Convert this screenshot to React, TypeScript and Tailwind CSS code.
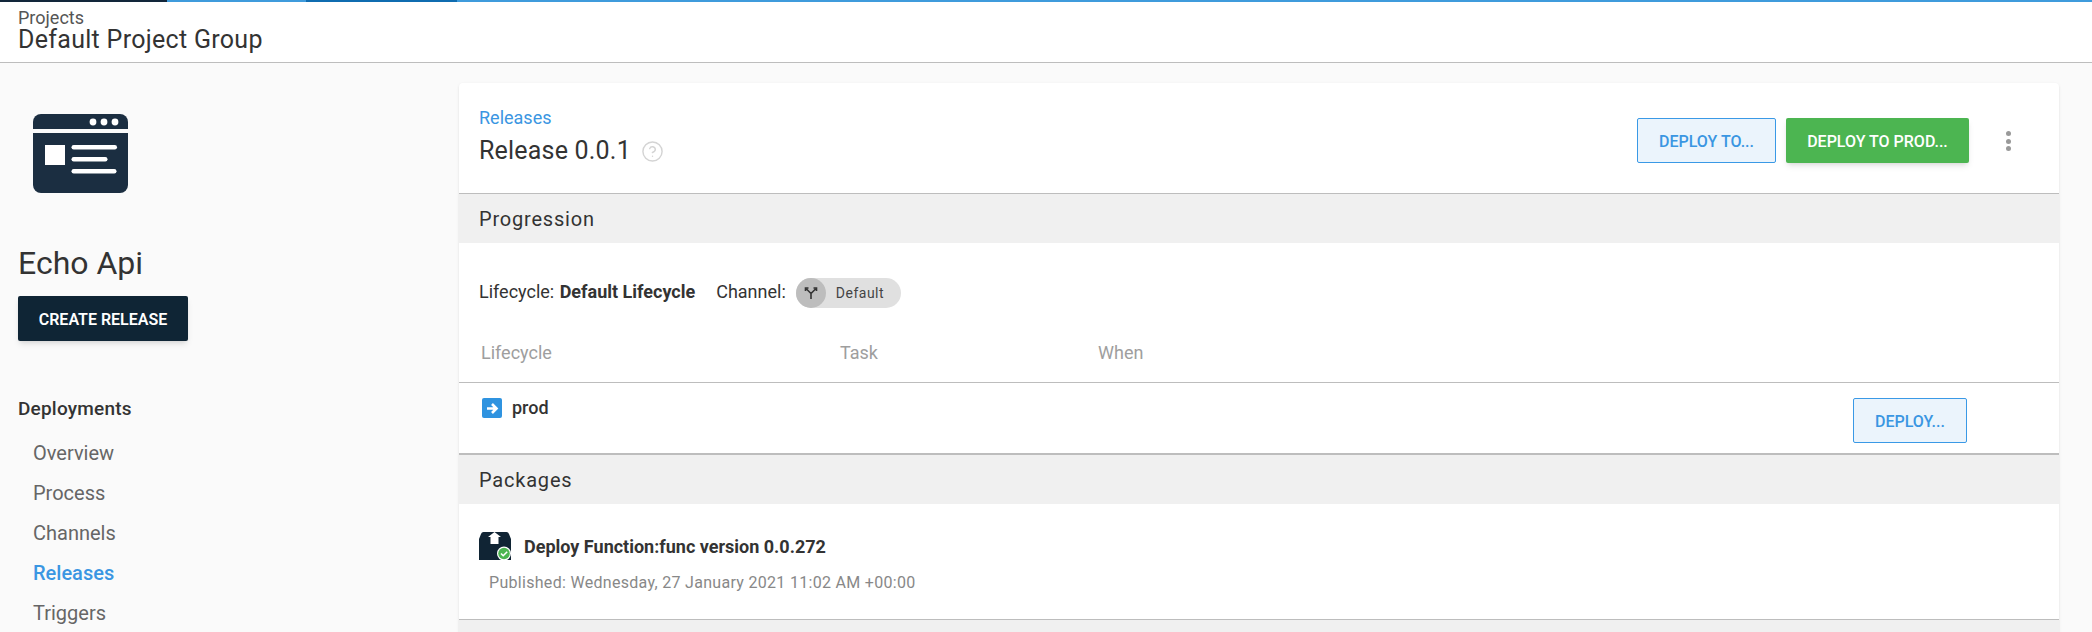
import { CircleHelp } from 'lucide-react';

const navItems = ['Overview', 'Process', 'Channels', 'Releases', 'Triggers'];

function AppIcon() {
  return (
    <svg width="95" height="79" viewBox="0 0 95 79" className="block">
      <path d="M0 15V8a8 8 0 0 1 8-8h79a8 8 0 0 1 8 8v7z" fill="#1b2e41" />
      <path d="M0 19h95v52a8 8 0 0 1-8 8H8a8 8 0 0 1-8-8z" fill="#1b2e41" />
      <circle cx="60" cy="8" r="3.4" fill="#fff" />
      <circle cx="71" cy="8" r="3.4" fill="#fff" />
      <circle cx="82" cy="8" r="3.4" fill="#fff" />
      <rect x="12" y="31" width="20" height="20" fill="#fff" />
      <rect x="38.5" y="31" width="45.5" height="4.4" rx="2.2" fill="#fff" />
      <rect x="38.5" y="43" width="36" height="4.4" rx="2.2" fill="#fff" />
      <rect x="38.5" y="55" width="45" height="4.4" rx="2.2" fill="#fff" />
    </svg>
  );
}

function SectionHeader({ title }: { title: string }) {
  return (
    <div className="h-[49px] bg-[#f0f0f0] pl-5 flex items-center text-[20px] tracking-[0.8px] text-[#333]">
      {title}
    </div>
  );
}

function OutlineButton({ label, width }: { label: string; width: string }) {
  return (
    <button className={`${width} h-[45px] pt-[3px] rounded-[2px] border border-[#3a99e6] bg-[#ebf4fc] text-[16px] font-medium text-[#3a96e2] flex items-center justify-center`}>
      {label}
    </button>
  );
}

export default function App() {
  return (
    <div className="h-[632px] overflow-hidden bg-[#fafafa] font-['Roboto',sans-serif]">
      <div className="flex h-[2px]">
        <div className="w-[167px] bg-[#12263a]" />
        <div className="w-[139px] bg-[#3f9bdc]" />
        <div className="w-[151px] bg-[#0f6cb0]" />
        <div className="flex-1 bg-[#3f9bdc]" />
      </div>
      <div className="h-[61px] bg-white border-b border-[#bdbdbd] pl-[18px] pt-[6px]">
        <div className="text-[18px] leading-[20px] text-[#555]">Projects</div>
        <div className="text-[25px] leading-[24px] text-[#333] tracking-[0.3px]">Default Project Group</div>
      </div>
      <div className="flex">
        <aside className="w-[459px] pl-[18px] shrink-0">
          <div className="pl-[15px] pt-[51px]">
            <AppIcon />
          </div>
          <h1 className="mt-[50px] text-[32px] leading-[40px] text-[#333]">Echo Api</h1>
          <button className="mt-[13px] w-[170px] h-[45px] pt-[2px] bg-[#0f2535] rounded-[2px] text-[16px] font-semibold text-white shadow-md">
            CREATE RELEASE
          </button>
          <div className="mt-[56px] text-[19px] leading-[24px] font-medium tracking-[0.2px] text-[#333]">Deployments</div>
          <ul className="mt-[12px] pl-[15px]">
            {navItems.map((item) => (
              <li
                key={item}
                className={
                  item === 'Releases'
                    ? 'h-[40px] flex items-center text-[20px] font-medium text-[#3a96e2]'
                    : 'h-[40px] flex items-center text-[20px] text-[#666]'
                }
              >
                {item}
              </li>
            ))}
          </ul>
        </aside>
        <main className="w-[1600px] mt-[20px] bg-white rounded-t-[4px] shadow-sm">
          <div className="h-[111px] border-b border-[#bdbdbd] pl-5 pr-[48px] flex items-start justify-between">
            <div className="pt-[25px]">
              <div className="text-[18px] leading-[20px] text-[#3a96e2]">Releases</div>
              <div className="mt-[7px] flex items-center gap-[10px] text-[25px] leading-[32px] tracking-[0.2px] text-[#333]">
                Release 0.0.1
                <CircleHelp size={23} strokeWidth={1.5} className="text-[#d4d4d4]" />
              </div>
            </div>
            <div className="flex items-start pt-[35px]">
              <OutlineButton label="DEPLOY TO..." width="w-[139px]" />
              <button className="ml-[10px] w-[183px] h-[45px] pt-[2px] rounded-[2px] bg-[#4cb551] text-[16px] font-medium text-white shadow-md">
                DEPLOY TO PROD...
              </button>
              <div className="ml-[37px] mt-[13px] flex flex-col gap-[2.5px]">
                <span className="w-[5px] h-[5px] rounded-full bg-[#999]" />
                <span className="w-[5px] h-[5px] rounded-full bg-[#999]" />
                <span className="w-[5px] h-[5px] rounded-full bg-[#999]" />
              </div>
            </div>
          </div>
          <SectionHeader title="Progression" />
          <div className="h-[140px] border-b border-[#bdbdbd] pl-5">
            <div className="pt-[35px] flex items-center h-[65px] text-[18px] text-[#333]">
              <span className="mb-[4px]">Lifecycle:&nbsp;</span>
              <span className="ml-[1px] mb-[4px] font-bold">Default Lifecycle</span>
              <span className="ml-[21px] mb-[3px]">Channel:</span>
              <span className="ml-[10px] w-[105px] h-[30px] rounded-full bg-[#e0e0e0] flex items-center">
                <span className="w-[30px] h-[30px] rounded-full bg-[#bdbdbd] flex items-center justify-center">
                  <svg width="14" height="14" viewBox="0 0 14 14" fill="none" stroke="#333" strokeWidth="1.6">
                    <path d="M7 13V7.5L2.5 3M7 7.5L11.5 3M1.5 5V2h3M9.5 2h3v3" />
                  </svg>
                </span>
                <span className="ml-[10px] text-[14px] tracking-[0.5px] text-[#444]">Default</span>
              </span>
            </div>
            <div className="mt-[31px] flex text-[18px] text-[#9e9e9e]">
              <span className="ml-[2px] w-[359px]">Lifecycle</span>
              <span className="w-[258px]">Task</span>
              <span>When</span>
            </div>
          </div>
          <div className="h-[72px] border-b-2 border-[#bdbdbd] pl-[23px] pr-[92px] flex items-start justify-between">
            <div className="pt-[15px] flex items-start gap-[10px]">
              <span className="w-[20px] h-[20px] rounded-[2px] bg-[#2f93e0] flex items-center justify-center">
                <svg width="13" height="13" viewBox="0 0 13 13" fill="none" stroke="#fff" strokeWidth="2.6">
                  <path d="M1 6.5h9M6 2l4.5 4.5L6 11" />
                </svg>
              </span>
              <span className="text-[18px] leading-[20px] font-medium text-[#333]">prod</span>
            </div>
            <div className="pt-[15px]">
              <OutlineButton label="DEPLOY..." width="w-[114px]" />
            </div>
          </div>
          <SectionHeader title="Packages" />
          <div className="h-[116px] border-b border-[#bdbdbd] pl-5">
            <div className="pt-[28px] flex items-center">
              <svg width="32" height="28" viewBox="0 0 32 28">
                <path d="M0 7 2 2a3 3 0 0 1 3-2h22a3 3 0 0 1 3 2l2 5v21H0z" fill="#102434" />
                <path d="M11.5 12V5H9l6.5-5 6.5 5h-2.5v7z" fill="#fff" />
                <circle cx="25" cy="21.5" r="7" fill="#fff" />
                <circle cx="25" cy="21.5" r="5.8" fill="#4cb551" />
                <path d="m22 21.5 2.2 2.2 4-4" stroke="#fff" strokeWidth="1.6" fill="none" />
              </svg>
              <span className="ml-[13px] text-[18px] font-bold text-[#333]">Deploy Function:func version 0.0.272</span>
            </div>
            <div className="pl-[10px] mt-[11px] text-[16px] tracking-[0.3px] text-[#888]">
              Published: Wednesday, 27 January 2021 11:02 AM +00:00
            </div>
          </div>
          <div className="h-[60px] bg-[#f0f0f0]" />
        </main>
      </div>
    </div>
  );
}
